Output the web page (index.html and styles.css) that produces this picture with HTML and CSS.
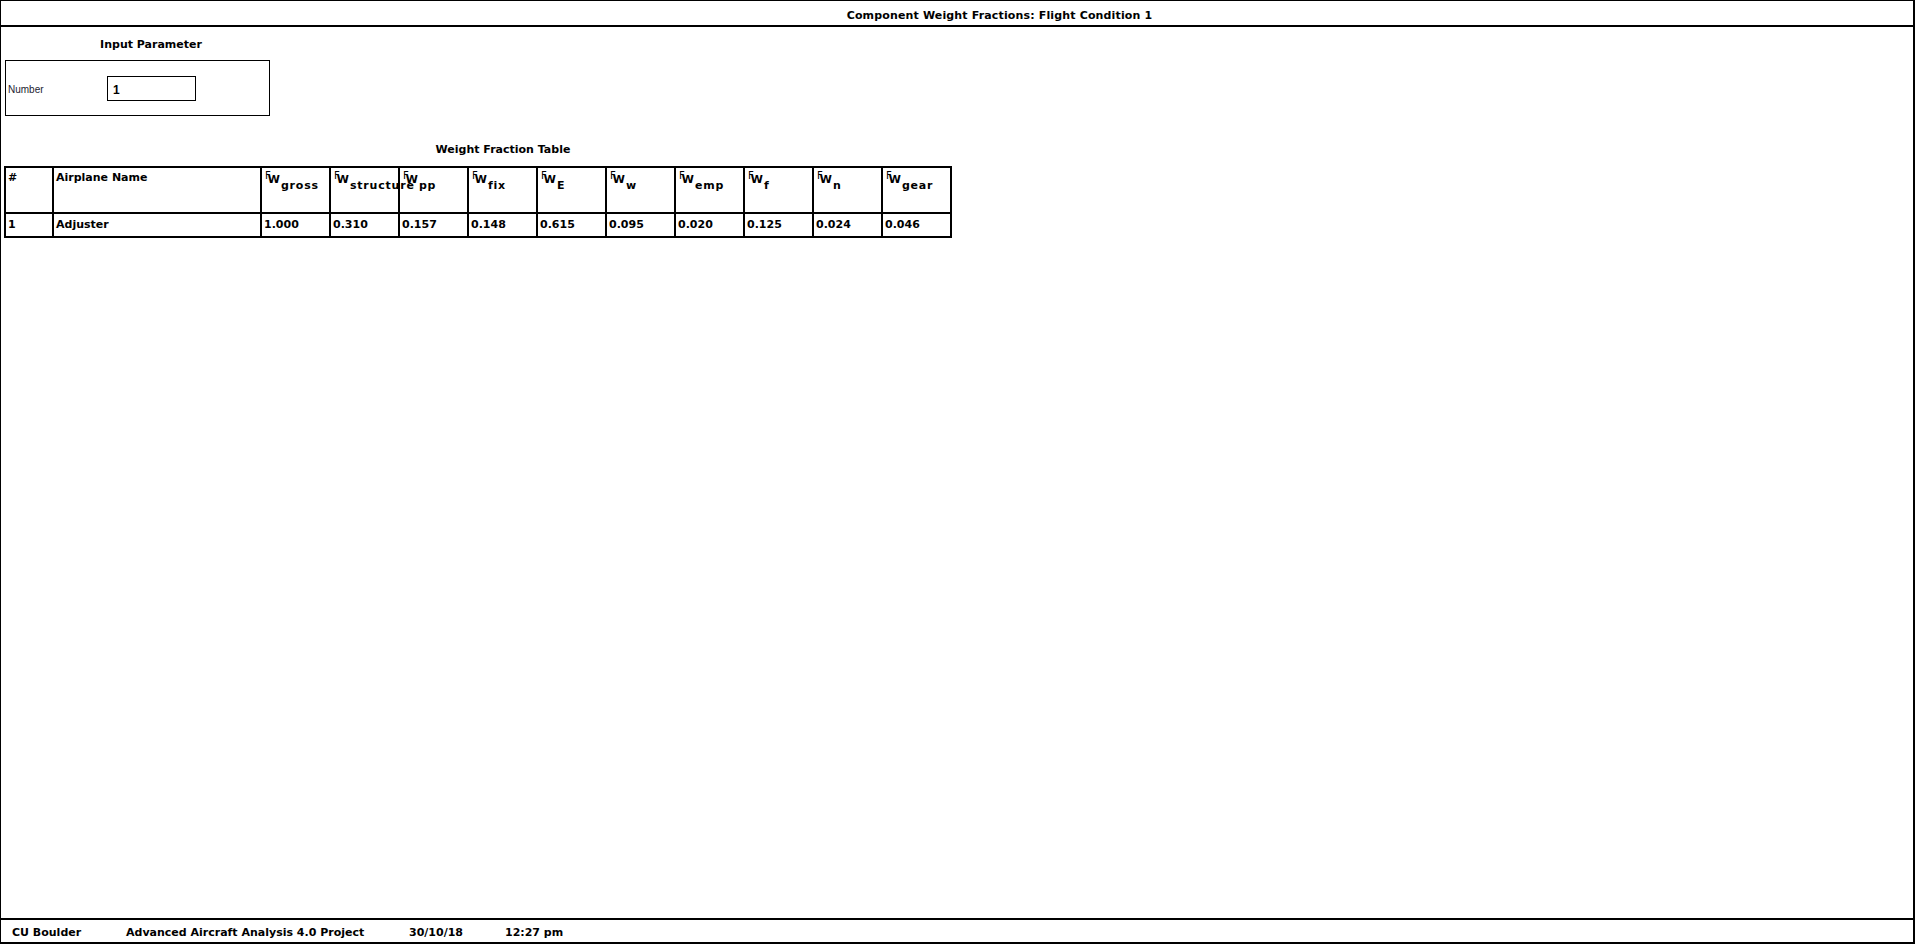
FILE: index.html
```html
<!DOCTYPE html>
<html lang="en">
<head>
<meta charset="utf-8">
<title>Component Weight Fractions: Flight Condition 1</title>
<link rel="stylesheet" href="styles.css">
</head>
<body>
<div class="window">
  <header class="titlebar">
    <h1 class="title">Component Weight Fractions: Flight Condition 1</h1>
  </header>
  <main class="content">
    <section class="input-section">
      <h2 class="section-title input-title">Input Parameter</h2>
      <div class="param-box">
        <label class="param-label" for="num">Number</label>
        <input id="num" class="param-input" type="text" value="1">
      </div>
    </section>
    <section class="table-section">
      <h2 class="section-title table-title">Weight Fraction Table</h2>
      <table class="wf-table">
        <thead>
          <tr>
            <th class="col-num">#</th>
            <th class="col-name">Airplane Name</th>
            <th class="col-f fw"><span class="f">F</span><span class="w">W</span><span class="sub">gross</span></th>
            <th class="col-f fw"><span class="f">F</span><span class="w">W</span><span class="sub">structure</span></th>
            <th class="col-f fw"><span class="f">F</span><span class="w">W</span><span class="sub">pp</span></th>
            <th class="col-f fw"><span class="f">F</span><span class="w">W</span><span class="sub">fix</span></th>
            <th class="col-f fw"><span class="f">F</span><span class="w">W</span><span class="sub">E</span></th>
            <th class="col-f fw"><span class="f">F</span><span class="w">W</span><span class="sub">w</span></th>
            <th class="col-f fw"><span class="f">F</span><span class="w">W</span><span class="sub">emp</span></th>
            <th class="col-f fw"><span class="f">F</span><span class="w">W</span><span class="sub">f</span></th>
            <th class="col-f fw"><span class="f">F</span><span class="w">W</span><span class="sub">n</span></th>
            <th class="col-f fw"><span class="f">F</span><span class="w">W</span><span class="sub">gear</span></th>
          </tr>
        </thead>
        <tbody>
          <tr>
            <td>1</td>
            <td>Adjuster</td>
            <td>1.000</td>
            <td>0.310</td>
            <td>0.157</td>
            <td>0.148</td>
            <td>0.615</td>
            <td>0.095</td>
            <td>0.020</td>
            <td>0.125</td>
            <td>0.024</td>
            <td>0.046</td>
          </tr>
        </tbody>
      </table>
    </section>
  </main>
  <footer class="statusbar">
    <span class="status-item">CU Boulder</span>
    <span class="status-item">Advanced Aircraft Analysis 4.0 Project</span>
    <span class="status-item">30/10/18</span>
    <span class="status-item">12:27 pm</span>
  </footer>
</div>
</body>
</html>
```
FILE: styles.css
```css
* {
  box-sizing: border-box;
}

html, body {
  margin: 0;
  padding: 0;
  background: #ffffff;
}

body {
  font-family: "DejaVu Sans", "Liberation Sans", sans-serif;
  font-size: 11px;
  line-height: 13px;
  color: #000000;
}

.window {
  width: 1915px;
  height: 944px;
  display: flex;
  flex-direction: column;
  border-top: 1px solid #000;
  border-left: 1px solid #000;
  border-right: 2px solid #000;
  border-bottom: 2px solid #000;
  background: #fff;
}

.titlebar {
  height: 26px;
  flex: 0 0 26px;
  border-bottom: 2px solid #000;
  padding: 8px 0 0 85px;
}

.title {
  margin: 0;
  font-size: 11px;
  line-height: 13px;
  font-weight: bold;
  text-align: center;
  letter-spacing: 0.15px;
}

.content {
  flex: 1 1 auto;
  display: flex;
  flex-direction: column;
}

.section-title {
  margin: 0;
  font-size: 11px;
  line-height: 13px;
  font-weight: bold;
  text-align: center;
}

.input-section {
  margin-top: 11px;
  margin-left: 4px;
}

.input-title {
  width: 292px;
}

.param-box {
  margin-top: 9px;
  width: 265px;
  height: 56px;
  border: 1px solid #000;
  display: flex;
  align-items: center;
  padding-left: 2px;
}

.param-label {
  width: 99px;
  font-family: "Liberation Sans", "DejaVu Sans", sans-serif;
  font-size: 10px;
  color: #1c1c30;
  padding-top: 2px;
}

.param-input {
  width: 89px;
  height: 25px;
  border: 1px solid #000;
  padding: 4px 5px 0;
  margin: 0;
  font-family: "Liberation Sans", sans-serif;
  font-size: 12px;
  font-weight: bold;
  color: #000;
  background: #fff;
  outline: none;
  border-radius: 0;
}

.table-section {
  margin-left: 3px;
}

.table-title {
  margin-top: 27px;
  margin-left: 1px;
  width: 996px;
}

.wf-table {
  margin-top: 10px;
  width: 948px;
  table-layout: fixed;
  border-collapse: separate;
  border-spacing: 0;
  border-top: 2px solid #000;
  border-left: 2px solid #000;
}

.wf-table th,
.wf-table td {
  border-right: 2px solid #000;
  border-bottom: 2px solid #000;
  padding: 3px 2px 0;
  text-align: left;
  vertical-align: top;
  font-weight: bold;
  white-space: nowrap;
  overflow: visible;
}

.wf-table th {
  height: 46px;
}

.wf-table td {
  height: 24px;
  padding-top: 4px;
}

.col-num {
  width: 48px;
}

.col-name {
  width: 208px;
}

.col-f {
  width: 69px;
}

.wf-table th.fw {
  padding-top: 5px;
}

.f {
  font-weight: normal;
  font-size: 10px;
  line-height: 0;
  vertical-align: 4px;
  margin-left: 1px;
}

.w {
  font-weight: bold;
  font-size: 11px;
  margin-left: -3px;
}

.sub {
  font-weight: bold;
  font-size: 11px;
  line-height: 0;
  vertical-align: -6px;
  letter-spacing: 0.8px;
  margin-left: 1px;
}

.statusbar {
  height: 24px;
  flex: 0 0 24px;
  border-top: 2px solid #000;
  display: grid;
  grid-template-columns: 114px 283px 96px auto;
  align-items: center;
  padding: 2px 0 0 11px;
  font-weight: bold;
}

.status-item {
  white-space: nowrap;
}
```
